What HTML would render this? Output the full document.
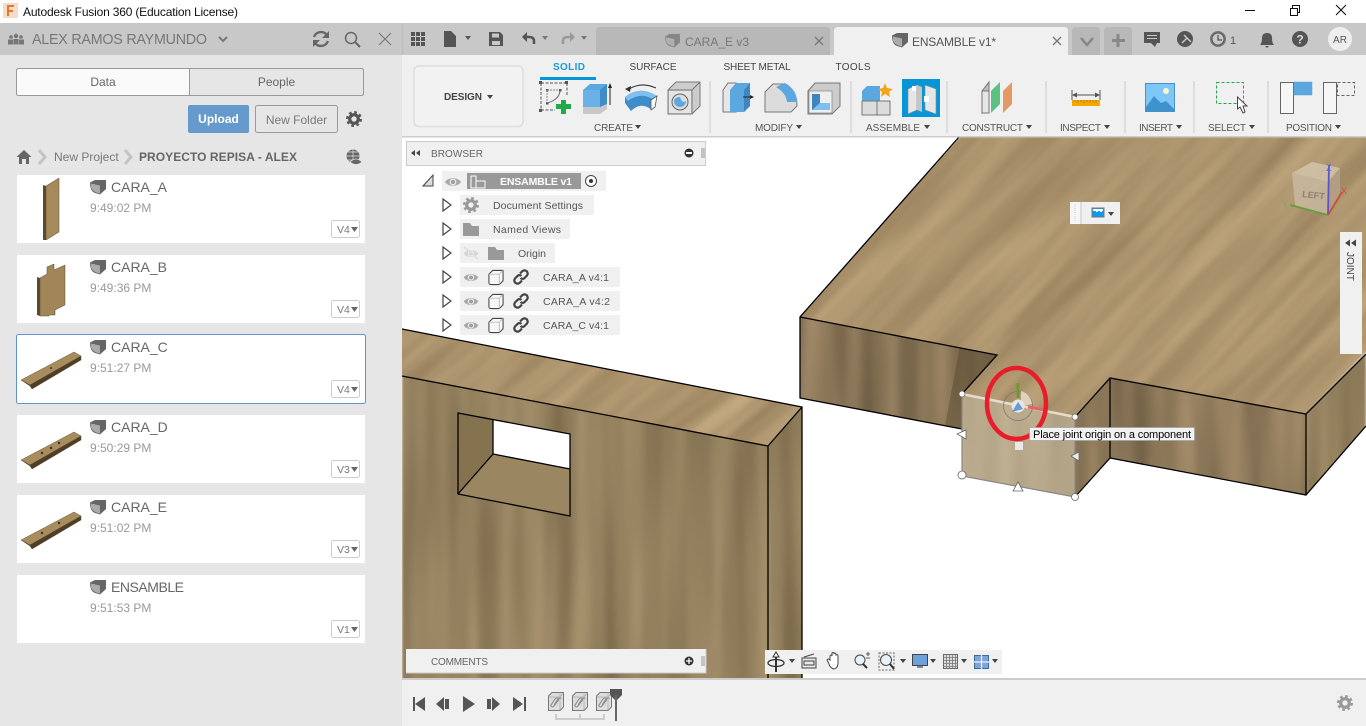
<!DOCTYPE html>
<html lang="en"><head><meta charset="utf-8"><title>Autodesk Fusion 360</title>
<style>
html,body{margin:0;padding:0;width:1366px;height:726px;overflow:hidden;background:#fff}
#app{position:absolute;left:0;top:0;width:1366px;height:726px;overflow:hidden}
svg{display:block;font-family:"Liberation Sans",Arial,sans-serif}
.l{font-size:10px;fill:#555}
.r{font-size:10.5px;fill:#555}
.t{font-size:14px;fill:#666}
.h{font-size:12px;fill:#999}
.v{font-size:10.5px;fill:#777}
</style></head><body><div id="app">
<svg width="1366" height="726" viewBox="0 0 1366 726" xmlns="http://www.w3.org/2000/svg">
<defs>
<filter id="wf" x="0" y="0" width="100%" height="100%" color-interpolation-filters="sRGB"><feTurbulence type="fractalNoise" baseFrequency="0.04 0.004" numOctaves="2" seed="4"/><feColorMatrix type="matrix" values="0.28 0 0 0 0.41  0.25 0 0 0 0.345  0.2 0 0 0 0.25  0 0 0 0 1"/><feGaussianBlur stdDeviation="1"/></filter>
<filter id="wf2" x="0" y="0" width="100%" height="100%" color-interpolation-filters="sRGB"><feTurbulence type="fractalNoise" baseFrequency="0.04 0.0035" numOctaves="2" seed="9"/><feColorMatrix type="matrix" values="0.26 0 0 0 0.45  0.24 0 0 0 0.385  0.2 0 0 0 0.27  0 0 0 0 1"/><feGaussianBlur stdDeviation="1"/></filter>
<filter id="wt" x="0" y="0" width="100%" height="100%" color-interpolation-filters="sRGB"><feTurbulence type="fractalNoise" baseFrequency="0.004 0.04" numOctaves="3" seed="7"/><feColorMatrix type="matrix" values="0.24 0 0 0 0.555  0.23 0 0 0 0.465  0.2 0 0 0 0.33  0 0 0 0 1"/><feGaussianBlur stdDeviation="1"/></filter>
<clipPath id="ct"><path d="M959 137 800 317 997 355 962 394 1075 417 1110 378 1306 414 1366 354V137z"/></clipPath>
<clipPath id="cf1"><path d="M800 317 997 355 962 394V429L800 398z"/></clipPath>
<clipPath id="cf2"><path d="M1075 417 1110 378V458L1075 497zM1110 378 1306 414V495L1110 458z"/></clipPath>
<clipPath id="cs"><path d="M1306 414 1366 354V426L1306 495z"/></clipPath>
<clipPath id="cl"><path d="M402 376 768 446V678H402z"/></clipPath>
<clipPath id="clt"><path d="M402 329 802 407 768 446 402 376z"/></clipPath>
<clipPath id="cls"><path d="M768 446 802 407V678H768z"/></clipPath>
<clipPath id="csel"><path d="M962 394 1075 417V497L962 476z"/></clipPath>
<symbol id="cube" viewBox="0 0 16 15"><path d="M0 2.5 5 0h11v9l-6 5.5-5-1.5C2 12 0 9 0 2.5z" fill="#666"/><path d="M1 3.5l9 2v8c-5-1-8-3-9-6z" fill="#aaa"/></symbol>
<symbol id="eye" viewBox="0 0 16 12"><path d="M0 6C3 1 13 1 16 6 13 11 3 11 0 6z" fill="#a8a8a8"/><circle cx="8" cy="6" r="3.4" fill="#eee"/><circle cx="8" cy="6" r="2.2" fill="#a0a0a0"/></symbol>
<symbol id="box" viewBox="0 0 17 17"><path d="M1 5 5 1H16V12L12 16H3Q1 16 1 14z" fill="#f8f8f8" stroke="#444" stroke-width="1.100"/><path d="M12 5V16M12 5 16 1M12 5H1" fill="none" stroke="#bbb"/></symbol>
<symbol id="link" viewBox="0 0 16 16"><g fill="none" stroke="#444" stroke-width="2.2"><path d="M7 4.500 9.500 2Q11.500.6 13.800 2.300 15.500 4.500 14 6.500L11 9.500Q9 10.500 7.500 9"/><path d="M9 11.500 6.500 14Q4.500 15.400 2.200 13.700.5 11.500 2 9.500L5 6.500Q7 5.500 8.500 7"/></g></symbol>
<symbol id="tri" viewBox="0 0 10 14"><path d="M1 1 9 7 1 13z" fill="#fff" stroke="#444" stroke-width="1.200"/></symbol>
<symbol id="gear" viewBox="-9 -9 18 18"><circle r="4.300" fill="none" stroke="currentColor" stroke-width="3.200"/><circle r="6.800" fill="none" stroke="currentColor" stroke-width="2.400" stroke-dasharray="2.700 2.640"/></symbol>
<symbol id="feat" viewBox="0 0 16 19"><path d="M.5 4 4 .5H15.500V15L12 18.500H.5z" fill="#ddd" stroke="#777"/><path d="M12 .8V5M.8 5H12V18M12 5 15.500 .8" fill="none" stroke="#aaa" stroke-width=".7"/><path d="M3 13 7 7Q9 5 10.500 6.500 11 8 9 10L6 14Q4 16 3 14zM6 13 10 7Q12 5 13.500 6.500" fill="none" stroke="#888" stroke-width="1"/></symbol>
<g id="plank" stroke="#4b3c26" stroke-width=".4"><path d="M21 380 30 386 32 389 81 360V356L30 384z" fill="#4e3e26"/><path d="M21 380 74 352 81 356 30 385z" fill="#a98c5e"/></g>
</defs>

<!-- title bar -->
<rect width="1366" height="23" fill="#fff"/>
<rect x="3" y="3" width="15" height="15" fill="#f6dcc6"/>
<path d="M7 5h7v2H9v3h4v2H9v4H7z" fill="#e8772e"/>
<text x="23" y="16" font-size="12" fill="#111" textLength="215">Autodesk Fusion 360 (Education License)</text>
<path d="M1245 10.500h10" stroke="#111" fill="none"/>
<path d="M1290.500 8.500h7v7h-7zM1292.500 8.500V5.500h7v7H1297.500" fill="none" stroke="#111"/>
<path d="M1336 5 1346 15M1346 5 1336 15" stroke="#111" stroke-width="1.100"/>

<!-- left panel -->
<rect y="23" width="402" height="703" fill="#e6e6e6"/>
<rect y="23" width="402" height="32" fill="#c8c8c8"/>
<g fill="#777"><circle cx="11" cy="37" r="1.800"/><circle cx="16" cy="36" r="2.200"/><circle cx="21" cy="37" r="1.800"/><rect x="8" y="39.500" width="5" height="5"/><rect x="13.500" y="39" width="5" height="5.500"/><rect x="19" y="39.500" width="5" height="5"/></g>
<text x="32" y="44" font-size="14.300" fill="#777" textLength="175">ALEX RAMOS RAYMUNDO</text>
<path d="M219 37 223 41 227 37" fill="none" stroke="#777" stroke-width="2"/>
<g fill="none" stroke="#666" stroke-width="2.300"><path d="M314 37A7.500 7.500 0 0 1 327 35"/><path d="M328 41A7.500 7.500 0 0 1 315 43"/></g>
<path d="M329 31V38H322zM313 47V40H320z" fill="#666"/>
<circle cx="351" cy="38" r="5.500" fill="none" stroke="#666" stroke-width="1.500"/><path d="M355 42 360 47" stroke="#666" stroke-width="2"/>
<path d="M379 33 391 45M391 33 379 45" stroke="#777" stroke-width="1.100"/>

<rect x="16.500" y="68.500" width="347" height="27" rx="2" fill="#e6e6e6" stroke="#999"/>
<path d="M17 69H189V95H17z" fill="#fafafa"/><rect x="16.500" y="68.500" width="347" height="27" rx="2" fill="none" stroke="#999"/><path d="M189.500 69V95" stroke="#999"/>
<text x="103" y="86" font-size="12" fill="#666" text-anchor="middle">Data</text>
<text x="276.500" y="86" font-size="12" fill="#666" text-anchor="middle">People</text>
<rect x="188" y="105" width="61" height="28" rx="2" fill="#6699cc"/>
<text x="218.500" y="123" font-size="12" font-weight="bold" fill="#fff" text-anchor="middle">Upload</text>
<rect x="255.500" y="105.500" width="82" height="27" rx="2" fill="none" stroke="#999"/>
<text x="296.500" y="124" font-size="12" fill="#777" text-anchor="middle">New Folder</text>
<use href="#gear" x="345" y="110" width="18" height="18" color="#555"/>
<path d="M24 150 31.500 157H29V164H26V159H22V164H19V157H16.500z" fill="#666"/>
<path d="M39 150 45 157 39 164" fill="none" stroke="#c4c4c4" stroke-width="3"/>
<text x="54" y="161" font-size="12" fill="#777">New Project</text>
<path d="M125 150 131 157 125 164" fill="none" stroke="#c4c4c4" stroke-width="3"/>
<text x="139" y="161" font-size="12" font-weight="bold" fill="#666" textLength="158">PROYECTO REPISA - ALEX</text>
<circle cx="353" cy="156" r="6.500" fill="#666"/><path d="M346.500 156H359.500M353 149.500V162.500M348 152H358M348 160H358" stroke="#e6e6e6" stroke-width=".7" fill="none"/>
<path d="M350 162Q356 156 362 162 356 167 350 162z" fill="#666" stroke="#e6e6e6" stroke-width=".7"/>

<!-- cards -->
<g fill="#fff">
<rect x="17" y="175" width="348" height="68"/><rect x="17" y="255" width="348" height="68"/>
<rect x="16.500" y="334.500" width="349" height="69" rx="2" stroke="#5f93cf"/>
<rect x="17" y="415" width="348" height="68"/><rect x="17" y="495" width="348" height="68"/><rect x="17" y="575" width="348" height="68"/>
</g>
<!-- thumbnails -->
<path d="M43 185 46 186V240H43z" fill="#5c4a2e"/><path d="M46 186 59 178V232L46 240z" fill="#a58a5c" stroke="#5c4a2e" stroke-width=".5"/>
<path d="M37 277 40 278V316L37 315z" fill="#5c4a2e"/>
<path d="M40 278 47 274V267L54 264V270L65 265V305L55 310V315H49V316H40z" fill="#a08658" stroke="#5c4a2e" stroke-width=".5"/>
<use href="#plank"/><circle cx="51" cy="368" r="1" fill="#333"/>
<use href="#plank" y="80"/><circle cx="42" cy="453" r="1.200" fill="#333"/><circle cx="51" cy="448" r="1.200" fill="#333"/><circle cx="59" cy="443" r="1.200" fill="#333"/>
<use href="#plank" y="160"/><circle cx="42" cy="533" r="1.200" fill="#333"/><circle cx="59" cy="523" r="1.200" fill="#333"/>
<!-- card text -->
<use href="#cube" x="90" y="180" width="16" height="15"/><text x="111" y="192" class="t">CARA_A</text><text x="90" y="212" class="h">9:49:02 PM</text>
<use href="#cube" x="90" y="260" width="16" height="15"/><text x="111" y="272" class="t">CARA_B</text><text x="90" y="292" class="h">9:49:36 PM</text>
<use href="#cube" x="90" y="340" width="16" height="15"/><text x="111" y="352" class="t">CARA_C</text><text x="90" y="372" class="h">9:51:27 PM</text>
<use href="#cube" x="90" y="420" width="16" height="15"/><text x="111" y="432" class="t">CARA_D</text><text x="90" y="452" class="h">9:50:29 PM</text>
<use href="#cube" x="90" y="500" width="16" height="15"/><text x="111" y="512" class="t">CARA_E</text><text x="90" y="532" class="h">9:51:02 PM</text>
<use href="#cube" x="90" y="580" width="16" height="15"/><text x="111" y="592" class="t" textLength="73">ENSAMBLE</text><text x="90" y="612" class="h">9:51:53 PM</text>
<g fill="#fff" stroke="#ccc"><rect x="331.500" y="220.500" width="28" height="17" rx="2"/><rect x="331.500" y="300.500" width="28" height="17" rx="2"/><rect x="331.500" y="380.500" width="28" height="17" rx="2"/><rect x="331.500" y="460.500" width="28" height="17" rx="2"/><rect x="331.500" y="540.500" width="28" height="17" rx="2"/><rect x="331.500" y="620.500" width="28" height="17" rx="2"/></g>
<text x="337" y="233" class="v">V4</text><text x="337" y="313" class="v">V4</text><text x="337" y="393" class="v">V4</text><text x="337" y="473" class="v">V3</text><text x="337" y="553" class="v">V3</text><text x="337" y="633" class="v">V1</text>
<g fill="#666"><path d="M351 227h7l-3.500 5zM351 307h7l-3.500 5zM351 387h7l-3.500 5zM351 467h7l-3.500 5zM351 547h7l-3.500 5zM351 627h7l-3.500 5z"/></g>

<!-- viewport -->
<rect x="402" y="137" width="964" height="541" fill="#fff"/>
<g clip-path="url(#ct)"><rect x="886" y="103" width="523" height="442" transform="rotate(-46 1083 316)" filter="url(#wt)"/></g>
<g clip-path="url(#cf1)"><rect x="795" y="312" width="210" height="122" filter="url(#wf)"/><path d="M960 345 997 355 962 394V429L945 426z" fill="#3a2d18" opacity=".28"/></g>
<g clip-path="url(#cf2)"><rect x="1070" y="372" width="242" height="130" filter="url(#wf)"/></g>
<g clip-path="url(#cs)"><rect x="1300" y="350" width="66" height="150" filter="url(#wf2)"/></g>
<g clip-path="url(#clt)"><rect x="456" y="214" width="296" height="335" transform="rotate(-40 602 387)" filter="url(#wt)"/></g>
<g clip-path="url(#cl)"><rect x="402" y="370" width="370" height="310" filter="url(#wf2)"/></g>
<g clip-path="url(#cls)"><rect x="765" y="400" width="40" height="280" filter="url(#wf2)"/></g>
<path d="M493 420 570 434V469L493 454z" fill="#fff"/>
<path d="M458 413 493 420V454L458 494z" fill="#85734f"/>
<path d="M458 494 493 454 570 469V516z" fill="#9a8660"/>
<g fill="none" stroke="#000" stroke-width="1.300">
<path d="M402 329 802 407V678M402 376 768 446V678M768 446 802 407"/>
<path d="M458 413 570 434V516L458 494zM493 420V454L458 494M493 454 570 469"/>
<path d="M959 137 800 317V398L962 429M800 317 997 355 962 394M1110 378V458L1075 497M1075 417 1110 378 1306 414 1366 354M1110 458 1306 495 1366 426M1306 414V495"/>
</g>
<!-- selected face -->
<g clip-path="url(#csel)"><rect x="955" y="390" width="125" height="110" filter="url(#wf2)"/><rect x="955" y="390" width="125" height="110" fill="#dccfb8" opacity=".5"/></g>
<path d="M962 394 1075 417" stroke="#e6dccb" stroke-width="2.500" fill="none"/>
<path d="M962 394V476L1075 497V417" fill="none" stroke="#888" stroke-width="1.200"/>
<g fill="#fff" stroke="#666" stroke-width=".8"><circle cx="962" cy="394" r="3"/><circle cx="1075" cy="417" r="3"/><circle cx="962" cy="475" r="4"/><circle cx="1075" cy="497" r="3.500"/><path d="M957 434 966 430V439z"/><path d="M1071 456 1079 452V461z" fill="#eee"/><path d="M1018 482 1023 491H1013z"/></g>
<rect x="1015" y="442" width="8" height="8" fill="#e8e8e4"/>
<!-- triad -->
<circle cx="1018" cy="406" r="14.500" fill="none" stroke="#777" stroke-width=".8"/>
<path d="M1021 391A15 15 0 0 1 1032 404L1021 406z" fill="#dfd2bd"/>
<rect x="1016.500" y="383" width="3" height="15" fill="#6d9a2a"/>
<path d="M1028 407 1045 410" stroke="#e8606a" stroke-width="3"/>
<circle cx="1018" cy="406" r="6.500" fill="#e6e6e6"/>
<path d="M1012 412 1018 402 1023 409z" fill="#6a9ad8"/>
<ellipse cx="1016.500" cy="403.500" rx="29.500" ry="35.500" fill="none" stroke="#ea1c2a" stroke-width="4.500"/>
<rect x="1029.500" y="427.500" width="165" height="13" fill="#f2f2f2" stroke="#999" stroke-width=".6"/>
<text x="1033" y="438" font-size="11" fill="#000" textLength="158">Place joint origin on a component</text>

<!-- view cube -->
<g opacity=".85"><path d="M1292 173 1312 162 1340 168 1328 182z" fill="#d2c4ac"/><path d="M1292 173 1328 182V215L1295 205z" fill="#c9b9a0"/><path d="M1328 182 1340 168V193L1328 215z" fill="#b5a285"/></g>
<text x="1302" y="197" font-size="9" fill="#8c8070" transform="rotate(6 1302 197)" font-weight="bold">LEFT</text>
<path d="M1329 165 1328 215" stroke="#5b55cc" stroke-width="1.800"/><path d="M1290 205 1328 215" stroke="#5ea33a" stroke-width="1.800"/><path d="M1328 215 1342 192" stroke="#c8513c" stroke-width="1.800"/>
<text x="1326" y="171" font-size="9" fill="#6a66d8">Z</text><text x="1341" y="194" font-size="9" fill="#c8513c">X</text><text x="1282" y="207" font-size="9" fill="#7aaa55">Y</text>

<!-- float toolbar & joint -->
<rect x="1070" y="202" width="50" height="22" fill="#f0f0f0"/><rect x="1070" y="202" width="12" height="22" fill="#f6f6f6"/><path d="M1075 204V222" stroke="#ccc" stroke-dasharray="1 1"/><rect x="1080" y="202" width="2" height="22" fill="#ddd"/>
<rect x="1092" y="208" width="12" height="9" fill="#0b9aee" stroke="#777"/><path d="M1093 209h10v2h-1v1h-2v-1h-2v1h-2v-1h-3z" fill="#fff"/>
<path d="M1108 212h6l-3 4z" fill="#444"/>
<rect x="1340" y="232" width="22" height="122" fill="#f0f0f0"/>
<path d="M1345 243 1350 239.500V246.500zM1351 243 1356 239.500V246.500z" fill="#444"/>
<text x="1347" y="252" font-size="10" fill="#444" transform="rotate(90 1347 252)">JOINT</text>

<!-- top tab bar -->
<rect x="402" y="23" width="964" height="32" fill="#c8c8c8"/>
<rect x="402" y="23" width="1" height="32" fill="#bbb"/>
<g fill="#555"><rect x="411" y="32" width="4" height="4"/><rect x="416" y="32" width="4" height="4"/><rect x="421" y="32" width="4" height="4"/><rect x="411" y="37" width="4" height="4"/><rect x="416" y="37" width="4" height="4"/><rect x="421" y="37" width="4" height="4"/><rect x="411" y="42" width="4" height="4"/><rect x="416" y="42" width="4" height="4"/><rect x="421" y="42" width="4" height="4"/>
<path d="M444 31H451L456 36V47H444z"/><path d="M465 36h6l-3 4z"/>
<path d="M489 32H500L503 35V46H489zM492 33.500V37.500H499V33.500zM492 41V45H500V41z" fill-rule="evenodd"/>
<path d="M542 36h6l-3 4zM581 36h6l-3 4z" fill="#777"/></g>
<path d="M534 44V41Q534 37 529 37H524" fill="none" stroke="#555" stroke-width="2.500"/><path d="M527 32 522 37 527 42z" fill="#555"/>
<path d="M563 44V41Q563 37 568 37H573" fill="none" stroke="#999" stroke-width="2.500"/><path d="M570 32 575 37 570 42z" fill="#999"/>
<path d="M596 55V31Q596 27 600 27H826Q830 27 830 31V55z" fill="#b8b8b8"/>
<use href="#cube" x="665" y="34" width="15" height="14" opacity=".6"/>
<text x="685" y="46" font-size="12" fill="#777">CARA_E v3</text>
<path d="M815 37 823 45M823 37 815 45" stroke="#777" stroke-width="1.300"/>
<path d="M834 55V31Q834 27 838 27H1064Q1068 27 1068 31V55z" fill="#f0f0f0"/>
<use href="#cube" x="892" y="33" width="16" height="15"/>
<text x="912" y="46" font-size="12" fill="#555" textLength="84">ENSAMBLE v1*</text>
<path d="M1053 37 1061 45M1061 37 1053 45" stroke="#777" stroke-width="1.300"/>
<path d="M1072 55V31Q1072 27 1076 27H1096Q1100 27 1100 31V55z" fill="#b8b8b8"/>
<path d="M1081 38 1087 45 1093 38" fill="none" stroke="#888" stroke-width="2.500"/>
<path d="M1104 55V31Q1104 27 1108 27H1128Q1132 27 1132 31V55z" fill="#b8b8b8"/>
<path d="M1118 34V47M1112 40.500H1125" stroke="#888" stroke-width="3"/>
<path d="M1144 32H1160V43H1157L1155 47 1151 43H1144z" fill="#555"/><path d="M1147 35.500H1157M1147 38.500H1157" stroke="#c8c8c8"/>
<circle cx="1185" cy="39" r="8" fill="#555"/><path d="M1182 43 1187 38M1184 35 1191 42" stroke="#c8c8c8" stroke-width="1.500"/>
<circle cx="1218" cy="39" r="8" fill="#777"/><circle cx="1218" cy="39" r="6" fill="#c8c8c8" stroke="#555"/><path d="M1218 35V40H1222" fill="none" stroke="#555" stroke-width="1.300"/>
<text x="1230" y="44" font-size="11" fill="#555">1</text>
<path d="M1260 45Q1262 43 1262 38 1262 33 1267 33 1272 33 1272 38 1272 43 1274 45zM1265 46H1269L1267 48z" fill="#555"/>
<circle cx="1300" cy="39" r="8" fill="#555"/><text x="1300" y="43.500" font-size="12" font-weight="bold" fill="#ddd" text-anchor="middle">?</text>
<circle cx="1340" cy="39" r="12" fill="#eee"/><text x="1340" y="43" font-size="10" fill="#555" text-anchor="middle">AR</text>

<!-- ribbon -->
<rect x="402" y="55" width="964" height="81" fill="#f0f0f0"/><rect x="402" y="136" width="964" height="1.500" fill="#ccc"/>
<rect x="414" y="66" width="109" height="60.500" rx="5" fill="#f2f2f2" stroke="#ddd" stroke-width="1.500"/>
<text x="444" y="100" font-size="10" font-weight="bold" fill="#444" textLength="38">DESIGN</text><path d="M487 95h6l-3 4z" fill="#444"/>
<text x="569" y="70" font-size="10" font-weight="bold" fill="#1c9ad6" text-anchor="middle" textLength="32">SOLID</text>
<rect x="540" y="77" width="56" height="3" fill="#0696d7"/>
<text x="653" y="70" font-size="10" fill="#444" text-anchor="middle" textLength="47">SURFACE</text>
<text x="757" y="70" font-size="10" fill="#444" text-anchor="middle" textLength="67">SHEET METAL</text>
<text x="853" y="70" font-size="10" fill="#444" text-anchor="middle" textLength="35">TOOLS</text>
<g fill="#ddd"><rect x="709" y="81" width="2" height="52"/><rect x="850" y="81" width="2" height="52"/><rect x="946" y="81" width="2" height="52"/><rect x="1045" y="81" width="2" height="52"/><rect x="1124" y="81" width="2" height="52"/><rect x="1193" y="81" width="2" height="52"/><rect x="1267" y="81" width="2" height="52"/></g>

<!-- create -->
<path d="M541 83H567M541 83V110M541 110H555M567 83V95" fill="none" stroke="#555" stroke-dasharray="3 1.500"/>
<g fill="#555"><rect x="539" y="81" width="3" height="3"/><rect x="565" y="81" width="3" height="3"/><rect x="539" y="109" width="3" height="3"/><rect x="546" y="89" width="2.500" height="2.500"/><rect x="559" y="89" width="2.500" height="2.500"/><rect x="546" y="102" width="2.500" height="2.500"/></g>
<path d="M547 103Q559 100 560 91" fill="none" stroke="#666"/><path d="M547 90H559M547 90V103" fill="none" stroke="#888" stroke-dasharray="2 1"/>
<path d="M561 100H566V104H571V109H566V114H561V109H556V104H561z" fill="#1ea94a"/>
<path d="M583 90 590 84H607V105L600 110H583z" fill="#5ba8e0"/><path d="M600 90 607 84V105L600 110z" fill="#3f8ccb"/><path d="M583 90H600V108H583z" fill="#69b1e6"/>
<path d="M583 107H600L607 104V109L600 114H583z" fill="#c8c8c8"/>
<path d="M610 105V87" stroke="#222"/><path d="M608 88 610 83 612 88z" fill="#222"/>
<path d="M625 97Q640 85 657 96L652 110Q641 101 631 111L625 103z" fill="#3f8ccb"/><path d="M625 97Q640 85 657 96L654 100Q641 91 628 101z" fill="#7ec0f0"/><path d="M651 100 657 96 655 107 651 110z" fill="#fff" stroke="#555" stroke-width=".8"/>
<path d="M628 90Q640 81 656 88" fill="none" stroke="#333"/><path d="M625 89 631 86 630 92z" fill="#333"/>
<path d="M668 90 676 82H700V106L692 114H668z" fill="#ccc" stroke="#777"/><path d="M668 90H692V114M692 90 700 82" fill="none" stroke="#777"/><rect x="669" y="91" width="22" height="22" fill="#e4e4e4"/>
<circle cx="680" cy="102" r="8" fill="#dcdcdc" stroke="#666"/><path d="M674 101A6 6 0 1 0 686 101Q682 104 680 97 675 97 674 101z" fill="#5ba8e0"/>
<text x="594" y="131" class="l" textLength="39">CREATE</text><path d="M635 125h6l-3 4z" fill="#444"/>
<!-- modify -->
<path d="M723 90 728 83H736V112H723z" fill="#e6e6e6" stroke="#777"/><path d="M730 90 736 83H750V106L744 112H730z" fill="#5ba8e0"/><path d="M744 90 750 83V106L744 112z" fill="#3f86c0"/><path d="M743 97H752" stroke="#222"/><path d="M750 95 754 97 750 99z" fill="#222"/>
<path d="M765 112V92L773 84H785Q797 90 797 106L791 112z" fill="#dcdcdc" stroke="#777"/><path d="M776 87 785 83Q797 90 797 102H787Q786 93 776 87z" fill="#5ba8e0"/>
<path d="M808 91 815 83H840V106L832 114H808z" fill="#ccc" stroke="#777"/><rect x="809" y="91" width="23" height="22" fill="#eee" stroke="#777" stroke-width=".6"/><path d="M812 94H820V103H830V110H812z" fill="#3f86c0"/><path d="M820 103H830V110H812z" fill="#7ec0f0"/>
<text x="755" y="131" class="l" textLength="38">MODIFY</text><path d="M796 125h6l-3 4z" fill="#444"/>
<!-- assemble -->
<path d="M862 91 867 86H880V103L875 106H862z" fill="#5ba8e0"/>
<path d="M862 101H890V115H862z" fill="#dcdcdc" stroke="#777"/><path d="M877 101V115" stroke="#777"/>
<path d="M885 83 887 88 893 89 889 92 890 97 885 94 881 97 882 92 878 89 883 88z" fill="#f2a51a"/>
<rect x="902" y="79" width="38" height="38" fill="#0696d7"/>
<path d="M908 89 917 85V110L908 114zM925 85 936 89V114L925 110z" fill="#e6e6e6" stroke="#888" stroke-width=".6"/><path d="M917 85 922 87V112L917 110z" fill="#c5c5c5"/>
<rect x="912" y="86" width="4" height="5" fill="#fff"/><rect x="924" y="96" width="5" height="6" fill="#fff"/>
<text x="866" y="131" class="l" textLength="54">ASSEMBLE</text><path d="M924 125h6l-3 4z" fill="#444"/>
<!-- construct -->
<path d="M982 91 989 82V104L982 113z" fill="#bbb" stroke="#777"/><rect x="982" y="91" width="7" height="22" fill="#e6e6e6" stroke="#777"/>
<path d="M991 91 1000 82V104L991 113z" fill="#5cc282"/>
<path d="M1003 91 1012 82V104L1003 113z" fill="#e59a66"/>
<text x="962" y="131" class="l" textLength="61">CONSTRUCT</text><path d="M1026 125h6l-3 4z" fill="#444"/>
<!-- inspect -->
<path d="M1072 90V100M1100 90V100M1073 95H1099" stroke="#555" fill="none"/><path d="M1072 95 1077 92.500V97.500zM1100 95 1095 92.500V97.500z" fill="#555"/>
<rect x="1072" y="100" width="28" height="6" fill="#f5a900"/><path d="M1075 100v2M1078 100v3M1081 100v2M1084 100v3M1087 100v2M1090 100v3M1093 100v2M1096 100v3" stroke="#8a6000" stroke-width=".6"/>
<text x="1060" y="131" class="l" textLength="41">INSPECT</text><path d="M1104 125h6l-3 4z" fill="#444"/>
<!-- insert -->
<rect x="1145.500" y="83.500" width="29" height="28" fill="#7fc7f7" stroke="#4a90c8"/><circle cx="1166" cy="91" r="3" fill="#fff6c8"/><path d="M1146 107 1154 96 1161 103 1166 101 1174 109V111H1146z" fill="#3f93cc"/>
<text x="1139" y="131" class="l" textLength="34">INSERT</text><path d="M1176 125h6l-3 4z" fill="#444"/>
<!-- select -->
<rect x="1216.500" y="82.500" width="27" height="21" fill="none" stroke="#1ea94a" stroke-dasharray="3 2"/>
<path d="M1237.500 97 1237.500 109 1240 107 1243 113 1245 112 1243 106 1247 106z" fill="#fff" stroke="#444"/>
<text x="1208" y="131" class="l" textLength="38">SELECT</text><path d="M1249 125h6l-3 4z" fill="#444"/>
<!-- position -->
<rect x="1280.500" y="82.500" width="13" height="31" fill="#f6f6f6" stroke="#666"/><rect x="1294" y="82" width="18" height="13" fill="#5ba8e0" stroke="#5b9fd4" stroke-width=".5"/>
<rect x="1323.500" y="82.500" width="13" height="31" fill="#f6f6f6" stroke="#666"/><rect x="1337.500" y="82.500" width="17" height="13" fill="none" stroke="#666" stroke-dasharray="3 2"/>
<text x="1286" y="131" class="l" textLength="46">POSITION</text><path d="M1335 125h6l-3 4z" fill="#444"/>

<!-- browser -->
<rect x="406.500" y="141.500" width="299" height="24" fill="#f0f0f0" stroke="#ccc"/>
<path d="M411 153 415 150V156zM416 153 420 150V156z" fill="#444"/>
<text x="431" y="157" font-size="10" fill="#666" textLength="52">BROWSER</text>
<circle cx="689" cy="153" r="4.500" fill="#333"/><rect x="686" y="152" width="6" height="2" fill="#fff"/><path d="M702 148V158M704 148V158" stroke="#999"/>
<path d="M423 186 433 175V186z" fill="#ddd" stroke="#444"/>
<rect x="442" y="171" width="164" height="20" fill="#f0f0f0"/><rect x="467" y="173" width="114" height="16" fill="#999"/>
<use href="#eye" x="445" y="176" width="16" height="12"/>
<path d="M471 176H476V181H485V188H471zM476 181V188" fill="none" stroke="#fff"/>
<text x="500" y="185" font-size="10.500" font-weight="bold" fill="#fff" textLength="72">ENSAMBLE v1</text>
<circle cx="591" cy="181" r="5.500" fill="#fff" stroke="#444"/><circle cx="591" cy="181" r="2" fill="#333"/>
<g fill="#f0f0f0"><rect x="460" y="195" width="134" height="20"/><rect x="460" y="219" width="110" height="20"/><rect x="460" y="243" width="95" height="20"/><rect x="460" y="267" width="160" height="20"/><rect x="460" y="291" width="160" height="20"/><rect x="460" y="315" width="160" height="20"/></g>
<use href="#tri" x="442" y="198" width="10" height="14"/><use href="#tri" x="442" y="222" width="10" height="14"/><use href="#tri" x="442" y="246" width="10" height="14"/><use href="#tri" x="442" y="270" width="10" height="14"/><use href="#tri" x="442" y="294" width="10" height="14"/><use href="#tri" x="442" y="318" width="10" height="14"/>
<use href="#gear" x="462" y="196" width="18" height="18" color="#999"/>
<text x="493" y="209" class="r" textLength="90">Document Settings</text>
<path d="M463 223H470L472 226H479V236H463z" fill="#999"/><text x="493" y="233" class="r" textLength="68">Named Views</text>
<use href="#eye" x="463" y="248" width="16" height="11" opacity=".35"/><path d="M464 247 478 259" stroke="#ddd" stroke-width="1.500"/>
<path d="M488 247H495L497 250H504V260H488z" fill="#999"/><text x="518" y="257" class="r" textLength="28">Origin</text>
<use href="#eye" x="463" y="272" width="16" height="11"/><use href="#box" x="488" y="269" width="16" height="17"/><use href="#link" x="513" y="269" width="16" height="16"/><text x="543" y="281" class="r" textLength="66">CARA_A v4:1</text>
<use href="#eye" x="463" y="296" width="16" height="11"/><use href="#box" x="488" y="293" width="16" height="17"/><use href="#link" x="513" y="293" width="16" height="16"/><text x="543" y="305" class="r" textLength="67">CARA_A v4:2</text>
<use href="#eye" x="463" y="320" width="16" height="11"/><use href="#box" x="488" y="317" width="16" height="17"/><use href="#link" x="513" y="317" width="16" height="16"/><text x="543" y="329" class="r" textLength="66">CARA_C v4:1</text>

<!-- comments -->
<rect x="406" y="649" width="300" height="24" fill="#f0f0f0"/><path d="M406 673H706V649" fill="none" stroke="#ccc"/>
<text x="431" y="665" font-size="10" fill="#666" textLength="57">COMMENTS</text>
<circle cx="689" cy="661" r="4.500" fill="#333"/><path d="M686 661H692M689 658V664" stroke="#fff" stroke-width="1.300"/><path d="M702 656V666M704 656V666" stroke="#999"/>

<!-- nav bar -->
<rect x="765" y="650" width="237" height="24" fill="#f0f0f0"/>
<path d="M776 653V672" stroke="#333" stroke-width="2"/><path d="M773 657 776 652 779 657z" fill="#fff" stroke="#333"/><ellipse cx="776" cy="663" rx="8" ry="3.500" fill="none" stroke="#333" stroke-width="1.300"/>
<path d="M789 659h6l-3 4zM900 659h6l-3 4zM930 659h6l-3 4zM961 659h6l-3 4zM992 659h6l-3 4z" fill="#444"/>
<path d="M802 658H816V668H802zM804 657 814 654M804 661H814V665H804z" fill="#e8e8e8" stroke="#444"/>
<path d="M830 660V656Q831 654 832 656V653Q833 652 834 653V654Q835 652 836 654V655Q838 654 838 656V663Q838 668 834 669 830 668 829 664L827 660Q828 658 830 660z" fill="#fff" stroke="#444"/>
<circle cx="860" cy="660" r="5" fill="#e8f0f8" stroke="#444"/><path d="M863 664 867 668" stroke="#333" stroke-width="2"/><path d="M866 654H870M868 652V656M866 658H870" stroke="#333" stroke-width=".8"/>
<rect x="879" y="653" width="15" height="17" fill="none" stroke="#666" stroke-dasharray="2 1.500"/><circle cx="886" cy="660" r="5.500" fill="#e8f0f8" stroke="#444"/><path d="M890 664 894 669" stroke="#333" stroke-width="2"/>
<rect x="912.500" y="654.500" width="15" height="11" fill="#6ea0dc" stroke="#444"/><path d="M917 666H923V668H917z" fill="#888"/>
<rect x="943.500" y="654.500" width="14" height="14" fill="#ddd" stroke="#666"/><path d="M946.500 654V669M949.500 654V669M952.500 654V669M955.500 654V669M943 657.500H958M943 660.500H958M943 663.500H958M943 666.500H958" stroke="#777" stroke-width=".8"/>
<rect x="974.500" y="655.500" width="14" height="13" fill="#7da6d8" stroke="#3f6aa0"/><path d="M981.500 655V669M974 662H989" stroke="#eef" stroke-width="1.200"/>

<!-- timeline -->
<rect x="402" y="678" width="964" height="48" fill="#f0f0f0"/><rect x="402" y="678" width="964" height="2" fill="#ccc"/>
<g fill="#555"><rect x="413" y="697" width="2" height="14"/><path d="M415 704 425 697V711zM436 704 444 697V711zM445 699H449V709H445zM463 696 475 704 463 712zM487 699H491V709H487zM492 697 500 704 492 711zM513 697 523 704 513 711z"/><rect x="524" y="697" width="2" height="14"/></g>
<use href="#feat" x="548" y="692" width="16" height="19"/><use href="#feat" x="572" y="692" width="16" height="19"/><use href="#feat" x="596" y="692" width="16" height="19"/>
<path d="M556 714V719H604V714M580 714V719" fill="none" stroke="#ccc" stroke-width="2"/>
<path d="M610 689H622V695L616 701 610 695z" fill="#555"/><rect x="615" y="695" width="2" height="26" fill="#666"/>
<use href="#gear" x="1336" y="694" width="18" height="18" color="#999"/>
</svg>
</div></body></html>
